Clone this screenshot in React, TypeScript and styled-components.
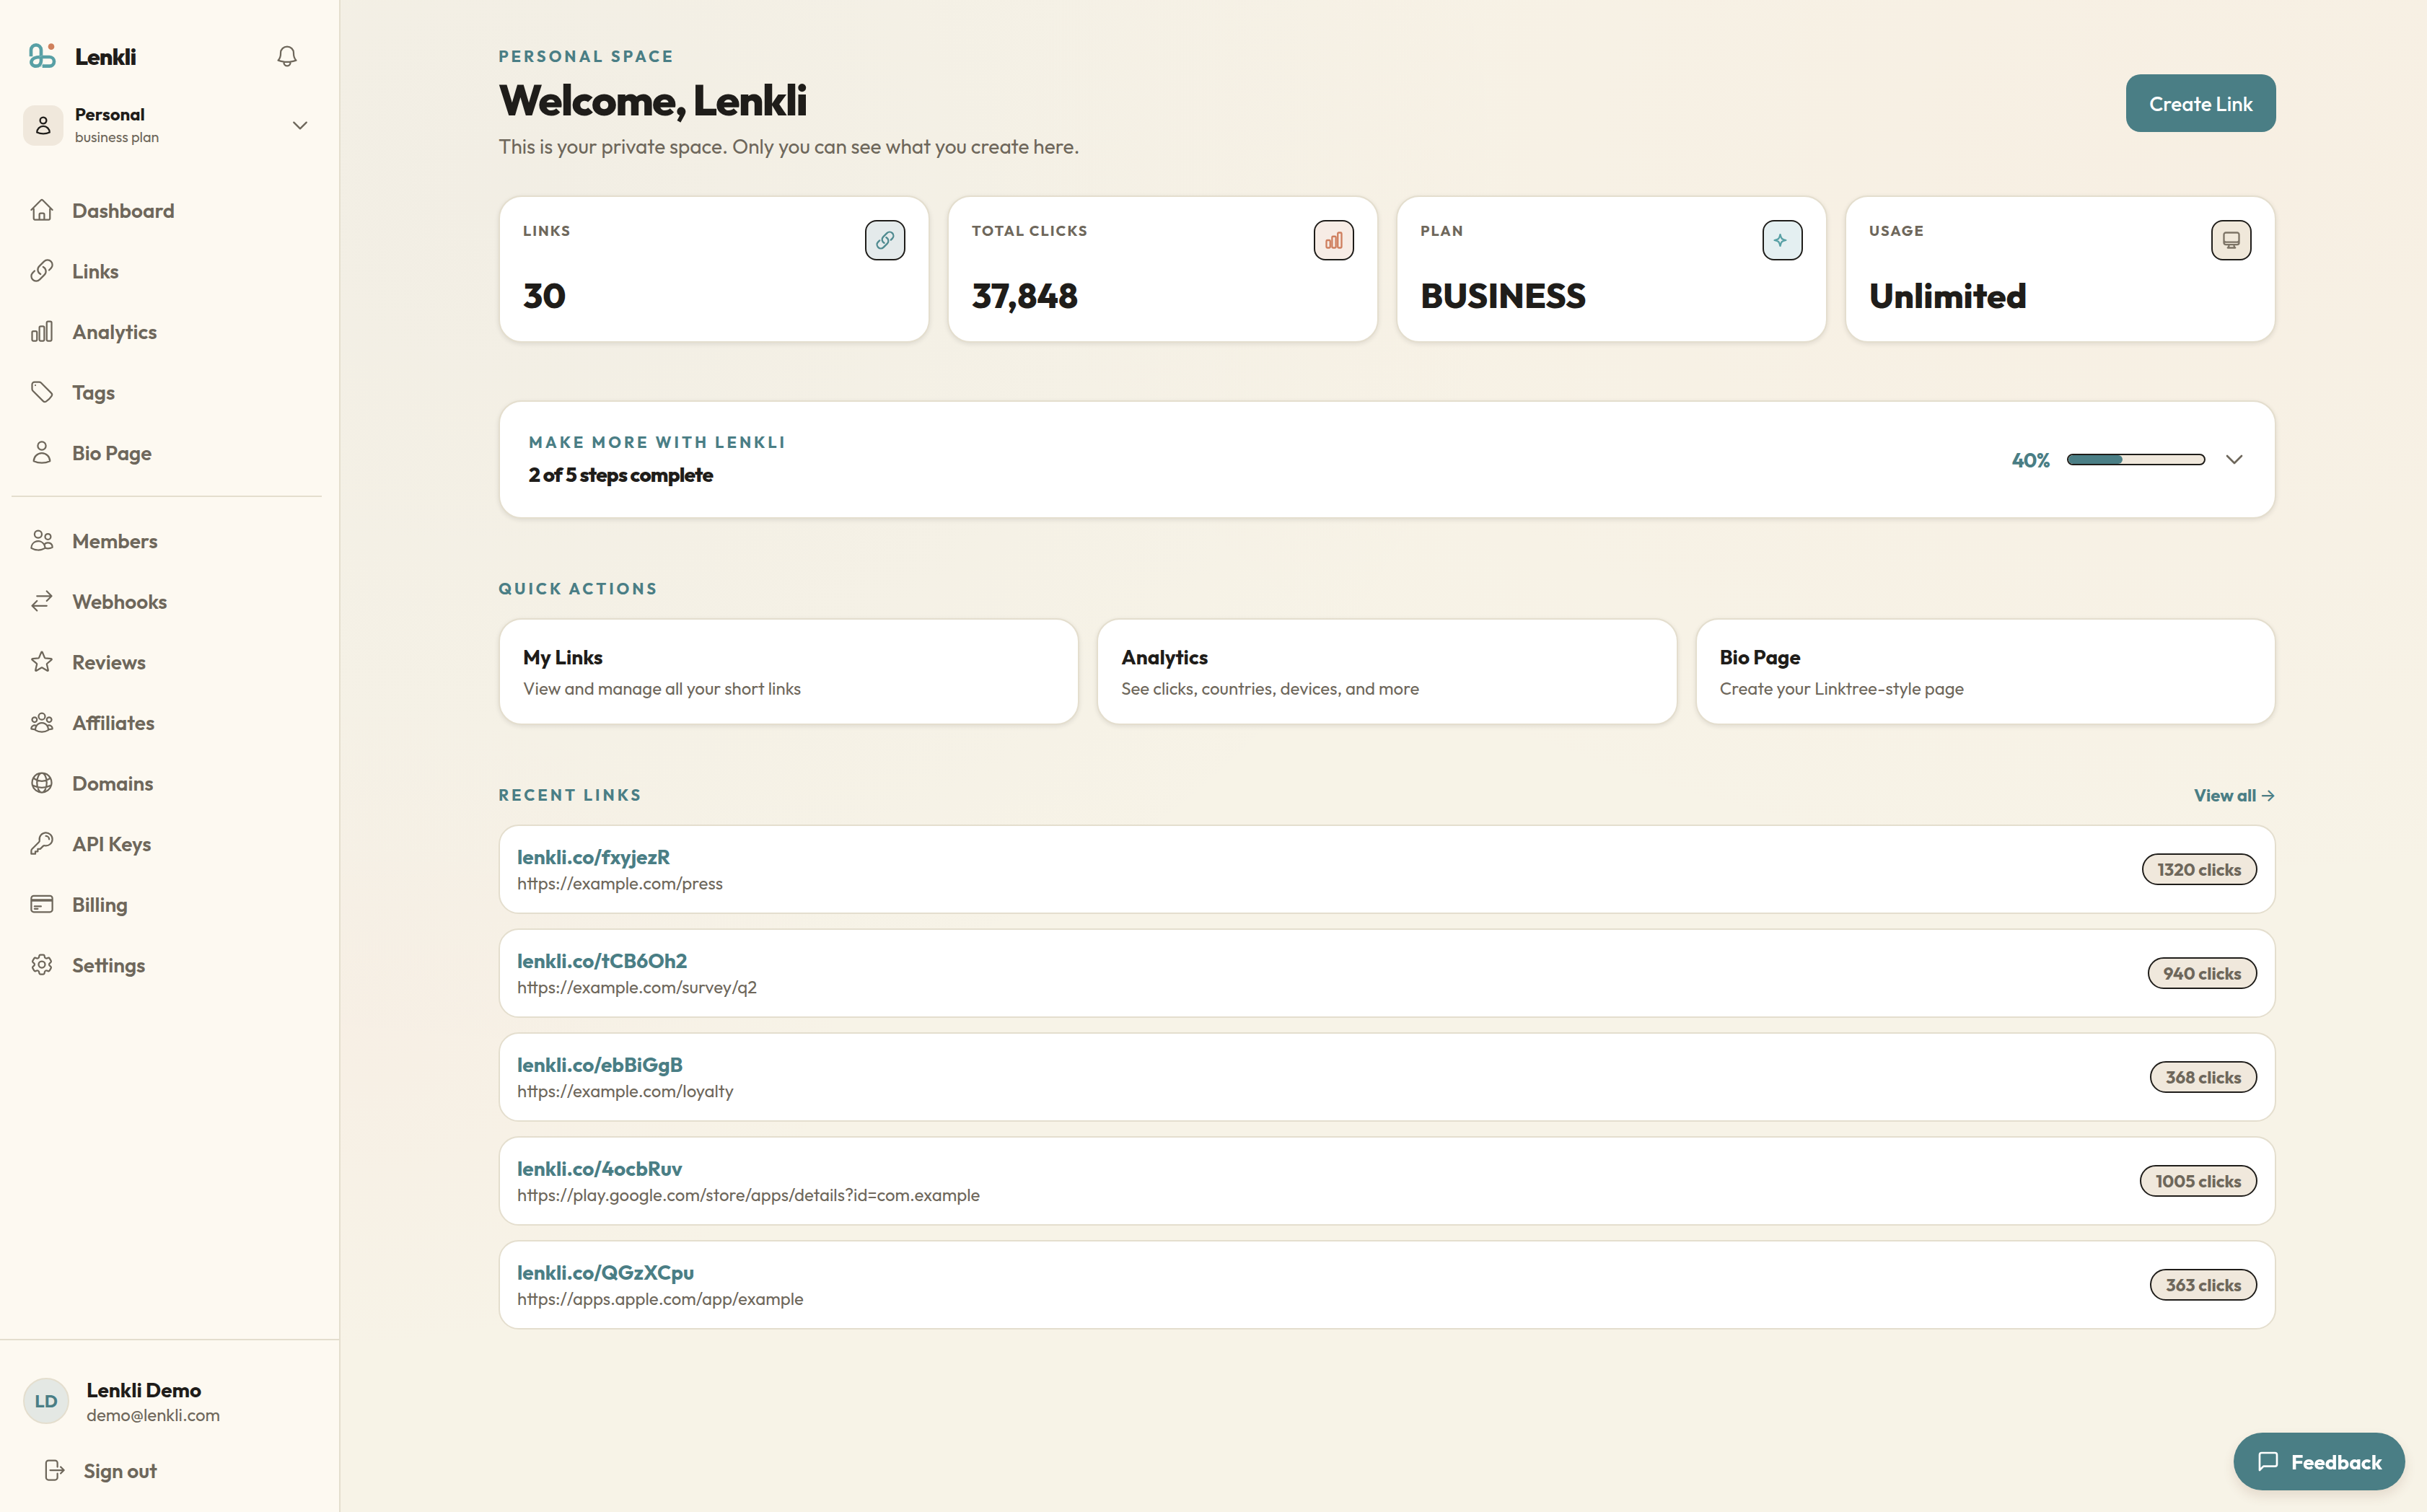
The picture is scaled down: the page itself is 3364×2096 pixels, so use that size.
import React from "react";
import styled, { createGlobalStyle, css } from "styled-components";
import {
  HiOutlineArrowRightOnRectangle,
  HiOutlineArrowsRightLeft,
  HiOutlineBell,
  HiOutlineChartBar,
  HiOutlineChevronDown,
  HiOutlineCog6Tooth,
  HiOutlineComputerDesktop,
  HiOutlineCreditCard,
  HiOutlineGlobeAlt,
  HiOutlineHome,
  HiOutlineKey,
  HiOutlineLink,
  HiOutlineStar,
  HiOutlineTag,
  HiOutlineUser,
  HiOutlineUserGroup,
  HiOutlineUsers,
} from "react-icons/hi2";

const color = {
  ink: "#1f1d1a",
  muted: "#6e675b",
  teal: "#4a7e85",
  line: "#e4dece",
  sand: "#f0e8dc",
  cream: "#fdf9f1",
  page: "#f7f3e7",
};

const GlobalStyle = createGlobalStyle`
  *, *::before, *::after { box-sizing: border-box; }
  body {
    margin: 0;
    background: ${color.page};
    color: ${color.ink};
    font-family: Outfit, Lato, "Liberation Sans", sans-serif;
    -webkit-font-smoothing: antialiased;
  }
  h1, h2, h3, p, ul { margin: 0; padding: 0; }
  ul { list-style: none; }
  a { color: inherit; text-decoration: none; }
  button { font: inherit; color: inherit; background: none; border: 0; padding: 0; margin: 0; cursor: pointer; }
`;

const Layout = styled.div`
  display: grid;
  grid-template-columns: 472px minmax(0, 1fr);
  min-height: 100vh;
`;

/* Sidebar */

const Sidebar = styled.aside`
  position: sticky;
  top: 0;
  height: 100vh;
  display: flex;
  flex-direction: column;
  background: ${color.cream};
  border-right: 2px solid ${color.line};
`;

const SidebarTop = styled.div`
  flex: 1;
  min-height: 0;
  padding: 51px 24px 0 16px;
`;

const BrandRow = styled.div`
  display: flex;
  align-items: center;
  justify-content: space-between;
  padding: 0 30px 0 16px;
`;

const Brand = styled.a`
  display: flex;
  align-items: center;
  gap: 18px;
  font-size: 32px;
  font-weight: 800;
  line-height: 54px;
  letter-spacing: -0.03em;
`;

const IconButton = styled.button`
  display: grid;
  place-items: center;
  color: ${color.muted};
`;

const SpaceSwitch = styled.button`
  width: 100%;
  display: flex;
  align-items: center;
  gap: 16px;
  margin-top: 38px;
  padding: 0 16px;
  text-align: left;
`;

const SpaceBadge = styled.span`
  display: grid;
  place-items: center;
  width: 56px;
  height: 56px;
  border-radius: 16px;
  background: ${color.sand};
`;

const SpaceText = styled.span`
  flex: 1;
  display: grid;
  line-height: 31px;
`;

const SpaceName = styled.span`
  font-size: 24px;
  font-weight: 700;
`;

const SpacePlan = styled.span`
  font-size: 20px;
  color: ${color.muted};
`;

const ChevronTone = styled.span`
  display: grid;
  color: ${color.muted};
`;

const Nav = styled.nav`
  margin-top: 44px;
`;

const Divider = styled.hr`
  height: 2px;
  margin: 18px 0;
  border: 0;
  background: ${color.line};
`;

const itemText = css`
  display: flex;
  align-items: center;
  gap: 24px;
  padding: 0 24px;
  font-size: 28px;
  font-weight: 600;
  color: ${color.muted};
`;

const NavLink = styled.a`
  ${itemText}
  height: 84px;
`;

const SidebarFooter = styled.div`
  padding: 52px 32px 20px;
  border-top: 2px solid ${color.line};
`;

const UserRow = styled.div`
  display: flex;
  align-items: flex-start;
  gap: 24px;
`;

const Avatar = styled.span`
  display: grid;
  place-items: center;
  width: 64px;
  height: 64px;
  border: 2px solid ${color.line};
  border-radius: 50%;
  background: #e4e8e4;
  color: ${color.teal};
  font-size: 24px;
  font-weight: 700;
`;

const UserText = styled.div`
  display: grid;
  line-height: 34px;
`;

const UserName = styled.span`
  font-size: 28px;
  font-weight: 700;
`;

const UserMail = styled.span`
  font-size: 24px;
  color: ${color.muted};
`;

const SignOut = styled.button`
  ${itemText}
  height: 76px;
  margin-top: 22px;
`;

/* Main column */

const Main = styled.main`
  padding: 64px 48px 96px 58px;
  background:
    radial-gradient(ellipse 50% 60% at 8% 12%, rgba(100, 100, 150, 0.035), transparent),
    radial-gradient(ellipse 60% 50% at 90% 10%, rgba(250, 140, 120, 0.04), transparent),
    radial-gradient(ellipse 25% 22% at 0% 68%, rgba(250, 140, 170, 0.035), transparent),
    ${color.page};
`;

const Content = styled.div`
  max-width: 2464px;
  margin: 0 auto;
  display: grid;
  gap: 80px;
`;

const Header = styled.header`
  display: flex;
  align-items: center;
  justify-content: space-between;
  margin-bottom: 49px;
`;

const HeaderText = styled.div`
  display: grid;
  gap: 10px;
`;

const Eyebrow = styled.p`
  font-size: 22px;
  line-height: 28px;
  font-weight: 700;
  letter-spacing: 0.18em;
  text-transform: uppercase;
  color: ${color.teal};
`;

const Title = styled.h1`
  font-size: 60px;
  line-height: 72px;
  font-weight: 800;
  letter-spacing: -0.03em;
`;

const Lead = styled.p`
  font-size: 28px;
  line-height: 38px;
  color: ${color.muted};
`;

const PrimaryButton = styled.button`
  height: 80px;
  padding: 0 32px;
  border-radius: 20px;
  background: ${color.teal};
  color: #fff;
  font-size: 28px;
  font-weight: 500;
`;

const panel = css`
  background: #fff;
  border: 2px solid ${color.line};
  border-radius: 32px;
  box-shadow: 0 2px 6px rgba(31, 29, 26, 0.1);
`;

const Stats = styled.div`
  display: grid;
  grid-template-columns: repeat(4, minmax(0, 1fr));
  gap: 24px;
`;

const StatCard = styled.div`
  ${panel}
  height: 204px;
  display: flex;
  flex-direction: column;
  justify-content: space-between;
  padding: 32px;
`;

const StatTop = styled.div`
  display: flex;
  align-items: flex-start;
  justify-content: space-between;
`;

const StatLabel = styled.p`
  font-size: 20px;
  line-height: 30px;
  font-weight: 700;
  letter-spacing: 2px;
  text-transform: uppercase;
  color: ${color.muted};
`;

const StatIcon = styled.span<{ $bg: string; $fg: string }>`
  display: grid;
  place-items: center;
  width: 56px;
  height: 56px;
  border: 2px solid ${color.ink};
  border-radius: 16px;
  background: ${(p) => p.$bg};
  color: ${(p) => p.$fg};
`;

const StatValue = styled.p`
  font-size: 48px;
  line-height: 64px;
  font-weight: 800;
`;

const Banner = styled.section`
  ${panel}
  display: flex;
  align-items: center;
  justify-content: space-between;
  padding: 40px;
`;

const BannerText = styled.div`
  display: grid;
  gap: 10px;
`;

const BannerEyebrow = styled(Eyebrow)`
  line-height: 32px;
`;

const BannerTitle = styled.h2`
  font-size: 28px;
  line-height: 38px;
  font-weight: 800;
  letter-spacing: -0.03em;
`;

const BannerSide = styled.div`
  display: flex;
  align-items: center;
  gap: 24px;
`;

const Percent = styled.span`
  font-size: 28px;
  font-weight: 700;
  letter-spacing: -0.03em;
  color: ${color.teal};
`;

const Track = styled.div`
  width: 192px;
  height: 16px;
  border: 2px solid ${color.ink};
  border-radius: 8px;
  background: ${color.sand};
  overflow: hidden;
`;

const Fill = styled.div`
  height: 100%;
  border-radius: 6px;
  background: ${color.teal};
`;

const SectionHead = styled.div`
  display: flex;
  align-items: center;
  justify-content: space-between;
  height: 34px;
  margin-bottom: 24px;
`;

const SectionTitle = styled(Eyebrow).attrs({ as: "h2" })``;

const Actions = styled.div`
  display: grid;
  grid-template-columns: repeat(3, minmax(0, 1fr));
  gap: 24px;
`;

const ActionCard = styled.a`
  ${panel}
  display: grid;
  gap: 6px;
  padding: 32px;
`;

const ActionTitle = styled.h3`
  font-size: 28px;
  line-height: 40px;
  font-weight: 700;
`;

const ActionText = styled.p`
  font-size: 24px;
  line-height: 34px;
  color: ${color.muted};
`;

const ViewAll = styled.a`
  font-size: 24px;
  line-height: 34px;
  font-weight: 700;
  color: ${color.teal};
`;

const Arrow = styled.span`
  font-family: Inter, sans-serif;
  font-weight: 500;
`;

const LinkList = styled.ul`
  display: grid;
  gap: 20px;
`;

const LinkRow = styled.li`
  display: flex;
  align-items: center;
  justify-content: space-between;
  padding: 24px;
  background: #fff;
  border: 2px solid ${color.line};
  border-radius: 28px;
`;

const LinkText = styled.div`
  display: grid;
`;

const ShortUrl = styled.a`
  font-size: 28px;
  line-height: 38px;
  font-weight: 700;
  color: ${color.teal};
`;

const LongUrl = styled.span`
  font-size: 24px;
  line-height: 34px;
  color: ${color.muted};
`;

const Clicks = styled.span`
  padding: 0 20px;
  border: 2px solid ${color.ink};
  border-radius: 22px;
  background: ${color.sand};
  font-size: 24px;
  line-height: 40px;
  font-weight: 700;
  color: ${color.muted};
`;

const Feedback = styled.button`
  position: fixed;
  right: 30px;
  bottom: 30px;
  height: 80px;
  display: flex;
  align-items: center;
  gap: 16px;
  padding: 0 32px;
  border-radius: 40px;
  background: ${color.teal};
  color: #fff;
  font-size: 28px;
  font-weight: 700;
  box-shadow: 0 8px 16px rgba(120, 70, 50, 0.14);
`;

const Logo = () => (
  <svg width="54" height="54" viewBox="0 0 162 162" fill="none" aria-hidden="true">
    <path
      d="M33 82V55a21 21 0 0 1 42 0v45c0 14-9 22-21 22-15 0-22-11-19-21 5-13 22-17 37-17h38a18 18 0 0 1 0 38H80"
      stroke="#58a0a5"
      strokeWidth="14"
    />
    <path d="M66 84 80 78M72 126l14-14" stroke="#8cc3c4" strokeWidth="2" />
    <circle cx="117" cy="41" r="13" fill="#cf805c" />
  </svg>
);

const Sparkle = () => (
  <svg width="28" height="28" viewBox="0 0 24 24" fill="none" stroke="currentColor" strokeWidth="2" strokeLinejoin="round" aria-hidden="true">
    <path d="M9.813 15.904 9 18.75l-.813-2.846a4.5 4.5 0 0 0-3.09-3.09L2.25 12l2.846-.813a4.5 4.5 0 0 0 3.09-3.09L9 5.25l.813 2.846a4.5 4.5 0 0 0 3.09 3.09L15.75 12l-2.846.813a4.5 4.5 0 0 0-3.09 3.09Z" />
  </svg>
);

const MessageIcon = () => (
  <svg width="32" height="32" viewBox="0 0 24 24" fill="none" stroke="currentColor" strokeWidth="2" strokeLinecap="round" strokeLinejoin="round" aria-hidden="true">
    <path d="M21 15a2 2 0 0 1-2 2H7l-4 4V5a2 2 0 0 1 2-2h14a2 2 0 0 1 2 2z" />
  </svg>
);

const personalNav = [
  { label: "Dashboard", Icon: HiOutlineHome },
  { label: "Links", Icon: HiOutlineLink },
  { label: "Analytics", Icon: HiOutlineChartBar },
  { label: "Tags", Icon: HiOutlineTag },
  { label: "Bio Page", Icon: HiOutlineUser },
];

const manageNav = [
  { label: "Members", Icon: HiOutlineUsers },
  { label: "Webhooks", Icon: HiOutlineArrowsRightLeft },
  { label: "Reviews", Icon: HiOutlineStar },
  { label: "Affiliates", Icon: HiOutlineUserGroup },
  { label: "Domains", Icon: HiOutlineGlobeAlt },
  { label: "API Keys", Icon: HiOutlineKey },
  { label: "Billing", Icon: HiOutlineCreditCard },
  { label: "Settings", Icon: HiOutlineCog6Tooth },
];

const stats = [
  { label: "Links", value: "30", icon: <HiOutlineLink size={28} strokeWidth={2} />, bg: "#e4eaeb", fg: "#4f8a90" },
  { label: "Total clicks", value: "37,848", icon: <HiOutlineChartBar size={28} strokeWidth={2} />, bg: "#f7ece5", fg: "#cf7f5f" },
  { label: "Plan", value: "BUSINESS", icon: <Sparkle />, bg: "#e4eff1", fg: "#58a0a5" },
  { label: "Usage", value: "Unlimited", icon: <HiOutlineComputerDesktop size={28} strokeWidth={2} />, bg: "#f0e8da", fg: "#7d7466" },
];

const actions = [
  { title: "My Links", text: "View and manage all your short links" },
  { title: "Analytics", text: "See clicks, countries, devices, and more" },
  { title: "Bio Page", text: "Create your Linktree-style page" },
];

const recent = [
  { short: "lenkli.co/fxyjezR", long: "https://example.com/press", clicks: 1320 },
  { short: "lenkli.co/tCB6Oh2", long: "https://example.com/survey/q2", clicks: 940 },
  { short: "lenkli.co/ebBiGgB", long: "https://example.com/loyalty", clicks: 368 },
  { short: "lenkli.co/4ocbRuv", long: "https://play.google.com/store/apps/details?id=com.example", clicks: 1005 },
  { short: "lenkli.co/QGzXCpu", long: "https://apps.apple.com/app/example", clicks: 363 },
];

const progress = 40;

type NavItem = (typeof personalNav)[number];

const NavGroup = ({ items }: { items: NavItem[] }) => (
  <ul>
    {items.map(({ label, Icon }) => (
      <li key={label}>
        <NavLink href="#">
          <Icon size={36} />
          {label}
        </NavLink>
      </li>
    ))}
  </ul>
);

export default function App() {
  return (
    <>
      <GlobalStyle />
      <Layout>
        <Sidebar>
          <SidebarTop>
            <BrandRow>
              <Brand href="#">
                <Logo />
                Lenkli
              </Brand>
              <IconButton type="button" aria-label="Notifications">
                <HiOutlineBell size={36} />
              </IconButton>
            </BrandRow>
            <SpaceSwitch type="button">
              <SpaceBadge>
                <HiOutlineUser size={28} strokeWidth={2} />
              </SpaceBadge>
              <SpaceText>
                <SpaceName>Personal</SpaceName>
                <SpacePlan>business plan</SpacePlan>
              </SpaceText>
              <ChevronTone>
                <HiOutlineChevronDown size={28} strokeWidth={2} />
              </ChevronTone>
            </SpaceSwitch>
            <Nav>
              <NavGroup items={personalNav} />
              <Divider />
              <NavGroup items={manageNav} />
            </Nav>
          </SidebarTop>
          <SidebarFooter>
            <UserRow>
              <Avatar>LD</Avatar>
              <UserText>
                <UserName>Lenkli Demo</UserName>
                <UserMail>demo@lenkli.com</UserMail>
              </UserText>
            </UserRow>
            <SignOut type="button">
              <HiOutlineArrowRightOnRectangle size={36} />
              Sign out
            </SignOut>
          </SidebarFooter>
        </Sidebar>

        <Main>
          <Content>
            <div>
              <Header>
                <HeaderText>
                  <Eyebrow>Personal space</Eyebrow>
                  <Title>Welcome, Lenkli</Title>
                  <Lead>This is your private space. Only you can see what you create here.</Lead>
                </HeaderText>
                <PrimaryButton type="button">Create Link</PrimaryButton>
              </Header>
              <Stats>
                {stats.map((s) => (
                  <StatCard key={s.label}>
                    <StatTop>
                      <StatLabel>{s.label}</StatLabel>
                      <StatIcon $bg={s.bg} $fg={s.fg}>
                        {s.icon}
                      </StatIcon>
                    </StatTop>
                    <StatValue>{s.value}</StatValue>
                  </StatCard>
                ))}
              </Stats>
            </div>

            <Banner>
              <BannerText>
                <BannerEyebrow>Make more with Lenkli</BannerEyebrow>
                <BannerTitle>2 of 5 steps complete</BannerTitle>
              </BannerText>
              <BannerSide>
                <Percent>{progress}%</Percent>
                <Track role="progressbar" aria-label="Setup progress" aria-valuenow={progress}>
                  <Fill style={{ width: `${progress}%` }} />
                </Track>
                <IconButton type="button" aria-label="Show steps">
                  <HiOutlineChevronDown size={32} strokeWidth={2} />
                </IconButton>
              </BannerSide>
            </Banner>

            <section>
              <SectionHead>
                <SectionTitle>Quick actions</SectionTitle>
              </SectionHead>
              <Actions>
                {actions.map((a) => (
                  <ActionCard href="#" key={a.title}>
                    <ActionTitle>{a.title}</ActionTitle>
                    <ActionText>{a.text}</ActionText>
                  </ActionCard>
                ))}
              </Actions>
            </section>

            <section>
              <SectionHead>
                <SectionTitle>Recent links</SectionTitle>
                <ViewAll href="#">
                  View all <Arrow>→</Arrow>
                </ViewAll>
              </SectionHead>
              <LinkList>
                {recent.map((r) => (
                  <LinkRow key={r.short}>
                    <LinkText>
                      <ShortUrl href="#">{r.short}</ShortUrl>
                      <LongUrl>{r.long}</LongUrl>
                    </LinkText>
                    <Clicks>{r.clicks} clicks</Clicks>
                  </LinkRow>
                ))}
              </LinkList>
            </section>
          </Content>
        </Main>
      </Layout>
      <Feedback type="button">
        <MessageIcon />
        Feedback
      </Feedback>
    </>
  );
}
